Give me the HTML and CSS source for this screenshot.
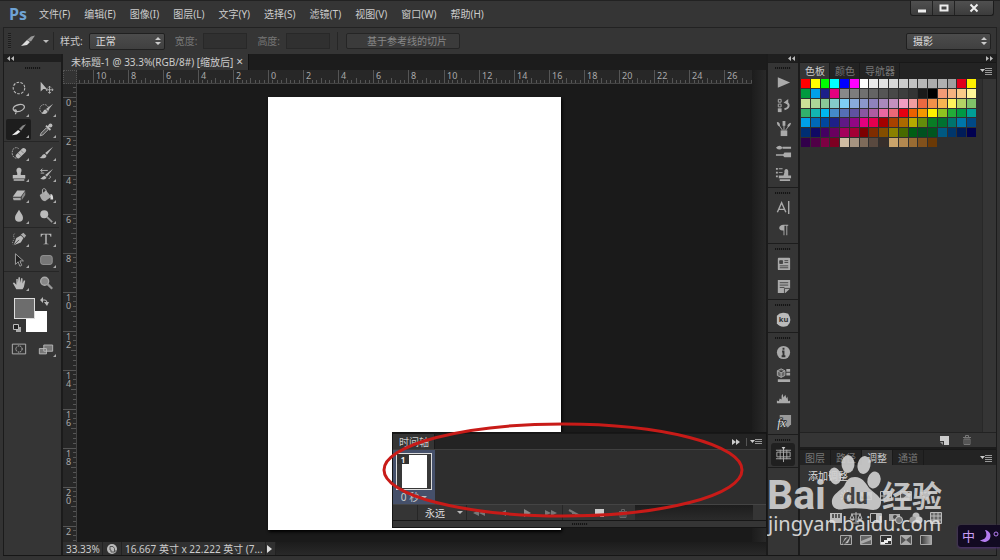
FILE: index.html
```html
<!DOCTYPE html>
<html lang="zh-CN">
<head>
<meta charset="utf-8">
<title>未标题-1</title>
<link rel="stylesheet" href="styles.css">
</head>
<body>
<div class="app">
  <header class="menubar">
    <span class="logo">Ps</span>
    <nav class="menus">
      <button>文件(F)</button><button>编辑(E)</button><button>图像(I)</button><button>图层(L)</button><button>文字(Y)</button><button>选择(S)</button><button>滤镜(T)</button><button>视图(V)</button><button>窗口(W)</button><button>帮助(H)</button>
    </nav>
    <div class="window-controls">
      <button aria-label="最小化"><svg width="10" height="10"><path d="M1 8h8" stroke="#eee" stroke-width="3"/></svg></button>
      <button aria-label="最大化"><svg width="10" height="10"><path d="M1.5 2.5h7v5h-7z" fill="none" stroke="#eee" stroke-width="2"/></svg></button>
      <button class="close" aria-label="关闭"><svg width="10" height="10"><path d="M1.5 1.5l7 7M8.500 1.500l-7 7" stroke="#eee" stroke-width="2"/></svg></button>
    </div>
  </header>

  <div class="options">
    <span class="vgrip"></span>
    <button class="tool-preset" aria-label="切片工具"><svg width="16" height="12"><path d="M1 11L7 5l3 2-3 3z" fill="#ddd"/><path d="M7 5l4-3.500 4-1-4 6z" fill="#999"/></svg><i class="caret"></i></button>
    <span class="vsep"></span>
    <label class="opt-label" for="style">样式:</label>
    <span class="select-wrap style-select"><select id="style"><option>正常</option></select><svg width="6" height="8"><path d="M3 0l3 3H0zM3 8l3-3H0z" fill="#ccc"/></svg></span>
    <label class="opt-label dim" for="w">宽度:</label><input id="w" disabled>
    <label class="opt-label dim" for="h">高度:</label><input id="h" disabled>
    <span class="vsep near"></span>
    <button class="guides" disabled>基于参考线的切片</button>
    <span class="select-wrap workspace"><select aria-label="工作区"><option>摄影</option></select><svg width="6" height="8"><path d="M3 0l3 3H0zM3 8l3-3H0z" fill="#ccc"/></svg></span>
  </div>

  <main class="body">
    <aside class="toolbox">
      <div class="collapse left"><svg width="7" height="5"><path d="M3 0v5L0 2.500zM7 0v5L4 2.500z" fill="#bbb"/></svg></div>
      <span class="grip"></span>
      <div class="tools">
        <button aria-label="椭圆选框" class="more"><svg viewBox="0 0 18 18"><circle cx="9" cy="9" r="6.500" fill="none" stroke="#bbb" stroke-width="1.200" stroke-dasharray="3 1.500"/></svg></button>
        <button aria-label="移动"><svg viewBox="0 0 18 18"><path d="M3 2v11l3-3h4z" fill="#bbb"/><path d="M13 7v8M9 11h8M11.500 8.500L13 7l1.500 1.500M11.500 13.500L13 15l1.500-1.500M10.500 9.500L9 11l1.500 1.500M15.500 9.500L17 11l-1.500 1.500" fill="none" stroke="#bbb"/></svg></button>
        <button aria-label="套索" class="more"><svg viewBox="0 0 18 18"><path d="M5 12C0 9 3 5 9 4s8 3 4 6-8 2-9 1 2-2 2 0-1 3-1 4" fill="none" stroke="#bbb" stroke-width="1.300"/></svg></button>
        <button aria-label="快速选择" class="more"><svg viewBox="0 0 18 18"><circle cx="7" cy="9" r="5" fill="none" stroke="#aaa" stroke-dasharray="2 1"/><path d="M17 3L9 9l2 2zM8.500 9.500c-3 0-2 4-5 4 3 2 7 1 7-2z" fill="#bbb"/></svg></button>
        <button aria-label="切片" class="more active"><svg viewBox="0 0 18 18"><path d="M1 15L8 9l2.500 2-4 3z" fill="#eee"/><path d="M9 8l4-4 4-1.500-5.500 7z" fill="#888"/></svg></button>
        <button aria-label="吸管" class="more"><svg viewBox="0 0 18 18"><path d="M2.500 15.500l1-3 6-6 2 2-6 6z" fill="#555" stroke="#bbb"/><path d="M9 4l5 5M11 6l3-3" stroke="#bbb" stroke-width="2"/><circle cx="14" cy="4" r="2.200" fill="#bbb"/></svg></button>
      </div>
      <div class="tools">
        <button aria-label="修复画笔" class="more"><svg viewBox="0 0 18 18"><path d="M6 15C1 14 0 8 3 4c3-2 5-1 6 1" fill="none" stroke="#aaa" stroke-dasharray="2 1"/><rect x="4" y="6.500" width="14" height="5.500" rx="2.700" transform="rotate(-45 11 9)" fill="#bbb"/><path d="M8 9l3 3M11 6l3 3" stroke="#777"/></svg></button>
        <button aria-label="画笔" class="more"><svg viewBox="0 0 18 18"><path d="M17 2L8 9l2 2zM7.500 10c-3 0-3 4-6 4 3 2 8 1 8-2z" fill="#bbb"/></svg></button>
        <button aria-label="图章" class="more"><svg viewBox="0 0 18 18"><path d="M7 8C5 4 7 2 9 2s4 2 2 6v2h5v4H2v-4h5zM3 15h12v1.500H3z" fill="#bbb"/></svg></button>
        <button aria-label="历史画笔" class="more"><svg viewBox="0 0 18 18"><path d="M17 3L8 10l2 2zM7.500 11c-2 0-3 3-5 3 3 2 7 1 7-1z" fill="#bbb"/><path d="M3 5h8M5 3L3 5l2 2M3 8h4M13 11c2 1 1 3-1 3" fill="none" stroke="#bbb"/></svg></button>
        <button aria-label="橡皮擦" class="more"><svg viewBox="0 0 18 18"><path d="M7 4h9l-5 7H2z" fill="#bbb"/><path d="M2 12h9v3H3z" fill="#aaa"/><path d="M12 11l4-6v4l-4 6z" fill="#888"/></svg></button>
        <button aria-label="油漆桶" class="more"><svg viewBox="0 0 18 18"><path d="M2 9l7-5 6 7-7 5c-3 0-5-3-6-7z" fill="#aaa"/><path d="M5 7V3c1-2 4-1 4 1v5" fill="none" stroke="#bbb"/><path d="M14 8c3 0 3 4 3 6h-3z" fill="#ddd"/></svg></button>
        <button aria-label="模糊" class="more"><svg viewBox="0 0 18 18"><path d="M9 2c2 4 4.500 6 4.500 9a4.500 4.500 0 0 1-9 0C4.500 8 7 6 9 2z" fill="#bbb"/></svg></button>
        <button aria-label="减淡" class="more"><svg viewBox="0 0 18 18"><circle cx="7" cy="7" r="4.500" fill="#bbb"/><path d="M10 10l6 6" stroke="#999" stroke-width="2"/></svg></button>
      </div>
      <div class="tools">
        <button aria-label="钢笔" class="more"><svg viewBox="0 0 18 18"><path d="M3 16l3-8 5-3 3 3-3 5z" fill="#bbb"/><path d="M11 4l4 4 2-3-3-3z" fill="#aaa"/><path d="M3.500 15.500L9 10" stroke="#444"/><path d="M4 3c-3 3 1 4-1 7s-1 3-1 5" fill="none" stroke="#999" stroke-dasharray="1.500 1"/></svg></button>
        <button aria-label="文字" class="more"><svg viewBox="0 0 18 18"><path d="M3 3h12v3.500h-1c0-1.500-1-2.500-2.500-2.500H9.800v10l2.200.5v.5H6v-.500l2.200-.5V4H6.500C5 4 4 5 4 6.500H3z" fill="#bbb"/></svg></button>
        <button aria-label="路径选择" class="more"><svg viewBox="0 0 18 18"><path d="M5 2v12l3-3 2 5 2-1-2-5h4z" fill="#222" stroke="#aaa"/></svg></button>
        <button aria-label="圆角矩形" class="more"><svg viewBox="0 0 18 18"><rect x="3" y="4" width="13" height="10" rx="2.500" fill="#777" stroke="#999"/></svg></button>
      </div>
      <div class="tools">
        <button aria-label="抓手" class="more"><svg viewBox="0 0 18 18"><path d="M6 16L2 9l1.500-.5L6 11V4.500h1.600V9L8.500 2.500h1.600V9L11.500 3.500 13 4v5.500L14.500 6l1.500.5-1.500 7-1.500 2.500z" fill="#bbb"/></svg></button>
        <button aria-label="缩放"><svg viewBox="0 0 18 18"><circle cx="7.500" cy="7" r="4.500" fill="#888" stroke="#aaa" stroke-width="1.500"/><path d="M10.500 10l5.500 5.500" stroke="#999" stroke-width="2.500"/></svg></button>
      </div>
      <div class="colors">
        <span class="bg-color"></span><span class="fg-color"></span>
        <svg class="swap" width="9" height="9"><path d="M2 3h3q2 0 2 3" fill="none" stroke="#bbb"/><path d="M3 0v6L0 3zM4 5h5L7 9z" fill="#bbb"/></svg>
        <svg class="reset" width="9" height="9"><path d="M3 3h5v5H3z" fill="#aaa"/><path d="M.5.500h5v5h-5z" fill="#222" stroke="#bbb"/></svg>
      </div>
      <div class="tools modes">
        <button aria-label="快速蒙版"><svg viewBox="0 0 18 18"><path d="M1.500 3.500h15v11h-15z" fill="#333" stroke="#bbb"/><circle cx="9" cy="9" r="3.500" fill="none" stroke="#ddd" stroke-dasharray="1.500 1"/></svg></button>
        <button aria-label="屏幕模式" class="more"><svg viewBox="0 0 18 18"><path d="M6.500 4.500h10v7h-10zM1.500 8.500h8v6h-8z" fill="#777" stroke="#bbb"/></svg></button>
      </div>
    </aside>

    <section class="document">
      <div class="doc-tabs"><div class="doc-tab"><span>未标题-1 @ 33.3%(RGB/8#) [缩放后]</span><button aria-label="关闭文档">×</button></div></div>
      <div class="workspace-grid">
        <div class="ruler-corner"></div>
        <svg class="ruler-h" id="ruler-h"></svg>
        <div class="vscroll"></div>
        <svg class="ruler-v" id="ruler-v"></svg>
        <div class="canvas"><div class="page"></div></div>
        <div class="vscroll"></div>
      </div>
      <footer class="status">
        <span class="zoom">33.33%</span>
        <span class="proof"><svg width="10" height="10"><circle cx="5" cy="5" r="5" fill="#bbb"/><path d="M3 2.500h3l1.500 2V8H4V6H3zM7 7h3" fill="none" stroke="#555"/></svg></span>
        <span class="doc-size">16.667 英寸 x 22.222 英寸 (7...</span>
        <button aria-label="状态栏选项"><svg width="6" height="8"><path d="M0 0v8l5-4z" fill="#ddd"/></svg></button>
      </footer>
    </section>

    <aside class="dock">
      <div class="collapse"><svg width="7" height="5"><path d="M3 0v5L0 2.500zM7 0v5L4 2.500z" fill="#bbb"/></svg></div>
      <div class="dock-group"><span class="grip"></span>
        <button aria-label="动作"><svg viewBox="0 0 18 18"><path d="M3 3.500v11L16 9z" fill="#aaa"/></svg></button>
        <button aria-label="历史记录"><svg viewBox="0 0 18 18"><path d="M3.500 2.500h3v3h-3zM3.500 7.500h3v3h-3z" fill="none" stroke="#aaa"/><path d="M3 12h4v4H3z" fill="#aaa"/><path d="M10 13c5-1 6-5 2-7" fill="none" stroke="#aaa" stroke-width="2"/><path d="M9 6l5-4v6z" fill="#aaa"/></svg></button>
        <button aria-label="画笔预设"><svg viewBox="0 0 18 18"><path d="M6 11h7v6H6z" fill="#aaa"/><path d="M8 11L4 5M9.500 11V4M11 11l4-5" stroke="#aaa"/><path d="M2 2q4 0 3 5-3-1-3-5zM8 1h3v5H8zM17 3q-1 5-4 4 0-3 4-4z" fill="#aaa"/></svg></button>
        <button aria-label="画笔"><svg viewBox="0 0 18 18"><path d="M1 5q4-4 7 0-3 4-7 0zM8 4h9v2H8zM1 12h9v1.500H1zM10 10h7v5h-7l-2-2z" fill="#aaa"/></svg></button>
        <button aria-label="仿制源"><svg viewBox="0 0 18 18"><path d="M1 2h2v2H1zM1 6h2v2H1zM1 10h2v2H1zM4 2.500h4v1H4zM4 6.500h4v1H4zM9 10l1-3c-1-5 5-5 4 0v3h3v3H4v-3zM5 14h11v2H5z" fill="#aaa"/></svg></button>
      </div>
      <div class="dock-group"><span class="grip"></span>
        <button aria-label="字符"><svg viewBox="0 0 18 18"><path d="M2.500 14L7 4l4.500 10M4 11h6M14.500 2v14" fill="none" stroke="#aaa" stroke-width="1.500"/></svg></button>
        <button aria-label="段落"><svg viewBox="0 0 18 18"><path d="M9 3h5v1h-1v10h-1V4h-2v10H9V9C3 10 3 3 9 3z" fill="#aaa"/></svg></button>
      </div>
      <div class="dock-group"><span class="grip"></span>
        <button aria-label="图层复合"><svg viewBox="0 0 18 18"><rect x="3" y="3" width="13" height="13" rx="1" fill="#aaa"/><path d="M5 6h3v3H5zM10 6h4M10 8h4M5 11.500h9M5 13.500h9" fill="#444" stroke="#444"/></svg></button>
        <button aria-label="注释"><svg viewBox="0 0 18 18"><path d="M3 2h13v9l-5 5H3z" fill="#aaa"/><path d="M5 5h9M5 7.500h9M5 10h5M10 16v-5h6" stroke="#444" fill="none"/></svg></button>
      </div>
      <div class="dock-group"><span class="grip"></span>
        <button aria-label="Kuler"><svg viewBox="0 0 18 18"><path d="M2 5q4-5 12-2 5 8-1 13-8 2-11-3z" fill="#bbb"/><text x="9" y="12" class="ku">ku</text></svg></button>
      </div>
      <div class="dock-group"><span class="grip"></span>
        <button aria-label="信息"><svg viewBox="0 0 18 18"><circle cx="9" cy="9" r="7" fill="#aaa"/><path d="M9 4v2M7.500 8H9v5M7 13h4" stroke="#333" stroke-width="2" fill="none"/></svg></button>
        <button aria-label="属性"><svg viewBox="0 0 18 18"><path d="M6.500 2l4 2v5l-4 2-4-2V4zM2.500 4l4 2 4-2M6.500 6v5" fill="#666" stroke="#aaa"/><path d="M12 2h4v3h-4zM12 6h4v3h-4zM3 13h13v3H3z" fill="#aaa"/></svg></button>
        <button aria-label="直方图"><svg viewBox="0 0 18 18"><path d="M2 14v-3l2 1 1-3 2 1V6l1-2 1 4 2-3 1 4 1-2 1 5 2-1v3z" fill="#aaa"/></svg></button>
        <button aria-label="样式"><svg viewBox="0 0 18 18"><path d="M5 2h12v10l-3 3H5z" fill="#999"/><text x="7" y="15" class="fx">fx</text></svg></button>
      </div>
      <div class="dock-group last"><span class="grip"></span>
        <button class="active" aria-label="时间轴"><svg viewBox="0 0 18 18"><path d="M1 4.500h16M1 13.500h16M2 6.500h14v5H2zM5.500 4v10M12.500 4v10M9 1v16" fill="none" stroke="#aaa"/><path d="M7 1h4L9 4z" fill="#ccc"/></svg></button>
      </div>
    </aside>

    <aside class="panels">
      <div class="collapse"><svg width="7" height="5"><path d="M0 0v5l3-2.500zM4 0v5l3-2.500z" fill="#bbb"/></svg></div>
      <section class="panel swatch-panel">
        <div class="tabs"><button class="on">色板</button><button>颜色</button><button>导航器</button><svg class="menu-icon" width="12" height="8"><path d="M0 2h5L2.500 5z" fill="#ccc"/><path d="M5 1.500h7M5 3.500h7M5 5.500h7M5 7.500h7" stroke="#999"/></svg></div>
        <div class="swatch-area"><div class="swatches" id="swatches"></div></div>
        <div class="panel-footer"><button aria-label="新建色板"><svg width="10" height="10"><path d="M1 1h9v9H5V6H1z" fill="#ccc"/><path d="M1 7l3 3V7z" fill="#999"/></svg></button><button aria-label="删除色板"><svg width="10" height="10"><path d="M1 2.500h8M3.500 2V.500h3V2M2 4h6v5.500H2zM4 4v5M6 4v5" fill="none" stroke="#777"/></svg></button></div>
      </section>
      <section class="panel adjust-panel">
        <div class="tabs"><button>图层</button><button>路径</button><button class="on">调整</button><button>通道</button><svg class="menu-icon" width="12" height="8"><path d="M0 2h5L2.500 5z" fill="#ccc"/><path d="M5 1.500h7M5 3.500h7M5 5.500h7M5 7.500h7" stroke="#999"/></svg></div>
        <p>添加调整</p>
        <div class="adjust-rows">
          <div class="adjust-row">
            <svg viewBox="0 0 14 12"><circle cx="7" cy="6" r="3" fill="#ddd"/><circle cx="7" cy="6" r="5" fill="none" stroke="#ddd" stroke-width="2" stroke-dasharray="1 2"/></svg>
            <svg viewBox="0 0 14 12"><path d="M1 2h12v8H1z" fill="#bbb"/><path d="M2 9V6l2 1 2-4 2 4 2-2 2 4z" fill="#444"/></svg>
            <svg viewBox="0 0 14 12"><path d="M1.500 1.500h11v9h-11zM1 6h12M5 1v10M9 1v10M2 10q6-1 10-8" fill="none" stroke="#bbb"/></svg>
            <svg viewBox="0 0 14 12"><path d="M1.500 1.500h11v9h-11z" fill="#555" stroke="#bbb"/><path d="M12 1v9H2z" fill="#bbb"/></svg>
            <svg viewBox="0 0 14 12"><path d="M1 2h12L7 11z" fill="#bbb"/></svg>
          </div>
          <div class="adjust-row">
            <svg viewBox="0 0 14 12"><path d="M1 1h12v10H1z" fill="#bbb"/><path d="M3 2h2v4H3zM6 2h2v4H6zM9 2h2v4H9z" fill="#555"/></svg>
            <svg viewBox="0 0 14 12"><path d="M7 0v10M2 2h10M4 11h6M3 2L1 7h4zM11 2L9 7h4z" fill="none" stroke="#bbb"/><path d="M1 7h5l-2 2zM8 7h5l-2 2z" fill="#bbb"/></svg>
            <svg viewBox="0 0 14 12"><path d="M1.500 1.500h11v9h-11z" fill="#333" stroke="#bbb"/><path d="M7 2h5v8H7z" fill="#bbb"/></svg>
            <svg viewBox="0 0 14 12"><path d="M0 2h11v7H0z" fill="#aaa"/><circle cx="6" cy="5" r="2" fill="#444"/><circle cx="10" cy="8" r="3.500" fill="#777" stroke="#ccc"/></svg>
            <svg viewBox="0 0 14 12"><circle cx="7" cy="4" r="3.500" fill="#bbb"/><circle cx="4" cy="8" r="3.500" fill="#999"/><circle cx="10" cy="8" r="3.500" fill="#ccc"/></svg>
            <svg viewBox="0 0 14 12"><path d="M1.500.500h11v11h-11zM1 4h12M1 8h12M5 0v12M9 0v12" fill="#666" stroke="#bbb"/></svg>
          </div>
          <div class="adjust-row">
            <svg viewBox="0 0 14 12"><path d="M1.500 1.500h11v9h-11z" fill="#444" stroke="#aaa"/><path d="M12 2L9 9l-6 1 3-6z" fill="#bbb"/><path d="M4 10L10 3" stroke="#444" stroke-width="2"/></svg>
            <svg viewBox="0 0 14 12"><path d="M1.500 1.500h11v9h-11z" fill="#666" stroke="#aaa"/><path d="M2 7l10-4v3L2 10z" fill="#aaa"/></svg>
            <svg viewBox="0 0 14 12"><path d="M1.500 1.500h11v9h-11z" fill="#333" stroke="#bbb"/><path d="M2 8h3V6h3V4h4v3H9v2H6v1H2z" fill="#eee"/></svg>
            <svg viewBox="0 0 14 12"><path d="M1.500 1.500h11v9h-11z" fill="#555" stroke="#aaa"/><path d="M2 2h10L7 6zM2 10l5-4 5 4z" fill="#aaa"/></svg>
            <svg viewBox="0 0 14 12"><defs><linearGradient id="map"><stop stop-color="#333"/><stop offset="1" stop-color="#aaa"/></linearGradient></defs><path d="M1.500 1.500h11v9h-11z" fill="url(#map)" stroke="#aaa"/></svg>
          </div>
        </div>
      </section>
    </aside>
  </main>

  <section class="timeline">
    <div class="tabs"><button class="on">时间轴</button><svg class="menu-icon" width="30" height="8"><path d="M0 1v6l4-3zM4 1v6l4-3z" fill="#ccc"/><path d="M14.500 0v8" stroke="#555"/><path d="M18 2h5l-2.500 3z" fill="#ccc"/><path d="M23 1.500h7M23 3.500h7M23 5.500h7" stroke="#999"/></svg></div>
    <div class="frames"><div class="frame"><div class="thumb"><b>1</b><i></i></div><button>0 秒<i class="caret"></i></button></div></div>
    <div class="playback">
      <button class="loop">永远<i class="caret"></i></button>
      <button aria-label="第一帧"><svg width="14" height="8"><path d="M7 1v6L1 4zM13 1v6L7 4z" fill="#777"/></svg></button>
      <button aria-label="上一帧"><svg width="14" height="8"><path d="M10 1v6L4 4z" fill="#777"/></svg></button>
      <button aria-label="播放"><svg width="14" height="8"><path d="M4 0v8l7-4z" fill="#888"/></svg></button>
      <button aria-label="下一帧" class="ruled"><svg width="14" height="8"><path d="M1 1v6l6-3zM7 1v6l6-3z" fill="#777"/></svg></button>
      <button aria-label="过渡"><svg width="14" height="8"><path d="M1 1l11 6M4 4h3M7 6h3" stroke="#777" stroke-width="2"/></svg></button>
      <button aria-label="复制帧"><svg width="14" height="10"><path d="M3 1h9v8H8V6H3z" fill="#ccc"/></svg></button>
      <button aria-label="删除帧"><svg width="14" height="10"><path d="M3 3.500h8M5.500 3V1.500h3V3M4 4h6v5.500H4zM6 4v5M8 4v5" fill="none" stroke="#666"/></svg></button>
      <span class="hscroll"></span><span class="scroll-end"></span>
    </div>
    <div class="resize"><span class="grip"></span></div>
  </section>

  <svg class="annotation" viewBox="0 0 364 98"><ellipse cx="182" cy="49" rx="179" ry="46" fill="none" stroke="#c81b18" stroke-width="3"/></svg>

  <svg class="watermark" viewBox="0 0 184 94">
    <g fill="#d2d2d2">
      <text x="0" y="59" class="wm-brand">Bai</text>
      <ellipse cx="81" cy="14" rx="6.500" ry="9"/><ellipse cx="97" cy="15" rx="6.500" ry="9" transform="rotate(12 97 15)"/><ellipse cx="68" cy="26" rx="6" ry="8.500" transform="rotate(-12 68 26)"/><ellipse cx="107" cy="30" rx="6.500" ry="8.500" transform="rotate(15 107 30)"/>
      <path d="M88 27c7 0 10 5 14 11 6 6 13 9 12 15-1 7-6 8-14 6-8-1-16-1-23 0-8 2-13-2-12-9 1-6 8-9 12-14 3-6 5-9 11-9z"/>
      <text x="115" y="57" class="wm-cjk">经验</text>
      <text x="1" y="81" class="wm-url">jingyan.baidu.com</text>
    </g>
    <text x="76" y="54" class="wm-du">du</text>
  </svg>

  <div class="ime"><span>中</span><svg width="20" height="14"><path d="M6 1a6 6 0 1 1-5 10c6 0 8-5 5-10z" fill="#b57df0"/><circle cx="17" cy="5" r="2" fill="none" stroke="#b57df0"/></svg></div>
</div>
<script src="app.js"></script>
</body>
</html>
```
FILE: styles.css
```css
* { box-sizing: border-box; }
body {
  margin: 0;
  background: #333;
  color: #ccc;
  font: 10px/14px "Noto Sans", "Noto Sans CJK SC", sans-serif;
}
button, select, input {
  margin: 0;
  padding: 0;
  border: 0;
  background: none;
  color: inherit;
  font: inherit;
}
svg { display: block; flex: none; }
.app {
  position: relative;
  display: flex;
  flex-direction: column;
  min-height: 100vh;
  overflow: hidden;
  padding-bottom: 4px;
}

/* Menu bar */
.menubar {
  display: flex;
  align-items: center;
  height: 27px;
  padding: 0 6px 0 9px;
  border-top: 1px solid #222;
  background: #353535;
}
.logo { width: 30px; color: #6fa3d4; font: bold 16px/22px "Open Sans", sans-serif; }
.menus { display: flex; gap: 14px; }
.menus button { white-space: nowrap; }
.window-controls {
  display: flex;
  align-self: flex-start;
  margin-left: auto;
  border: 1px solid #1c1c1c;
  border-top: 0;
  border-radius: 0 0 3px 3px;
  background: linear-gradient(#505050, #3c3c3c);
}
.window-controls button {
  display: grid;
  place-items: center;
  width: 22px;
  height: 14px;
  border-right: 1px solid #222;
}
.window-controls .close { width: 38px; border: 0; }

/* Options bar */
.options {
  display: flex;
  align-items: center;
  height: 27px;
  margin: 0 3px;
  padding: 0 5px 0 4px;
  border: 1px solid #222;
  border-bottom: 0;
  background: #353535;
}
.vgrip { width: 3px; height: 16px; background: repeating-linear-gradient(#1d1d1d 0 1px, #3a3a3a 1px 2px); }
.tool-preset { display: flex; align-items: center; gap: 7px; margin-left: 9px; }
.caret { width: 0; border: 3px solid transparent; border-top-color: #bbb; border-bottom: 0; }
.vsep { width: 1px; height: 18px; margin: 0 6px 0 4px; background: #262626; }
.vsep.near { margin: 0 8px 0 7px; }
.opt-label { white-space: nowrap; }
.dim { margin-left: 10px; color: #777; }
.options input {
  width: 44px;
  height: 16px;
  margin-left: 6px;
  border: 1px solid #282828;
  background: #303030;
}
.select-wrap {
  position: relative;
  display: flex;
  align-items: center;
  border: 1px solid #202020;
  border-radius: 2px;
  background: linear-gradient(#4c4c4c, #404040);
}
.select-wrap select { width: 100%; height: 15px; padding-left: 6px; appearance: none; color: #ddd; }
.select-wrap svg { position: absolute; right: 3px; pointer-events: none; }
.style-select { width: 76px; margin-left: 6px; }
.workspace { width: 85px; margin-left: auto; }
.guides {
  width: 114px;
  height: 16px;
  padding-left: 8px;
  border: 1px solid #252525;
  border-radius: 2px;
  background: #3b3b3b;
  color: #888;
}

/* Body columns */
.body {
  flex: 1;
  display: grid;
  grid-template-columns: 57px minmax(0, 1fr) 30px 196px;
  gap: 2px;
  margin: 0 3px;
  padding: 0 1px;
  background: #1b1b1b;
  border-bottom: 1px solid #161616;
}
.collapse {
  display: flex;
  justify-content: flex-end;
  align-items: center;
  height: 8px;
  padding-right: 3px;
  background: #1f1f1f;
}
.collapse.left { justify-content: flex-start; padding: 0 0 0 3px; }
.grip {
  display: block;
  width: 16px;
  height: 2px;
  margin: 0 auto;
  background: repeating-linear-gradient(90deg, #141414 0 1px, #303030 1px 2px);
}

/* Toolbox */
.toolbox { background: #353535; }
.toolbox > .grip { margin: 5px auto 8px; }
.tools {
  display: grid;
  grid-template-columns: 27px 27px;
  margin: 0 2px 0 0;
  padding-bottom: 1px;
}
.tools + .tools { border-top: 1px solid #262626; }
.tools button { position: relative; display: grid; place-items: center; height: 21px; margin-left: 2px; border-radius: 2px; }
.tools button svg { width: 16px; height: 16px; }
.tools .active { background: #1d1d1d; }
.more::after {
  content: "";
  position: absolute;
  right: 2px;
  bottom: 2px;
  border-left: 3px solid transparent;
  border-bottom: 3px solid #aaa;
}
.colors { position: relative; height: 44px; }
.fg-color, .bg-color { position: absolute; width: 21px; height: 21px; }
.fg-color { left: 10px; top: 4px; border: 1px solid #ddd; background: #6d6d6d; }
.bg-color { left: 22px; top: 17px; background: #fff; }
.swap { position: absolute; left: 36px; top: 3px; }
.reset { position: absolute; left: 9px; top: 30px; }

/* Document */
.document { display: flex; flex-direction: column; min-width: 0; }
.doc-tabs { height: 16px; background: #1c1c1c; }
.doc-tab {
  display: flex;
  align-items: center;
  justify-content: space-between;
  width: 186px;
  height: 16px;
  padding: 0 5px 0 8px;
  border-right: 1px solid #111;
  background: #353535;
  white-space: nowrap;
}
.doc-tab button { font-size: 12px; }
.workspace-grid {
  flex: 1;
  display: grid;
  grid-template: 14px minmax(0, 1fr) / 14px minmax(0, 1fr) 14px;
}
.ruler-corner { background: #333; border: 1px dotted #555; }
.ruler-h, .ruler-v { width: 100%; height: 100%; overflow: hidden; background: #272727; fill: #aaa; font-size: 9px; }
.ruler-h { border-bottom: 1px solid #444; }
.ruler-v { border-right: 1px solid #444; }
.canvas { display: grid; place-items: center; background: #1a1a1a; }
.page { width: 293px; height: 433px; background: #fff; box-shadow: 1px 2px 3px #000; }
.vscroll { background: linear-gradient(90deg, #1c1c1c, #292929); }
.status {
  display: flex;
  align-items: center;
  height: 13px;
  background: linear-gradient(#1c1c1c, #292929);
  white-space: nowrap;
}
.status > * { display: grid; align-items: center; height: 13px; background: #303030; border-right: 1px solid #222; }
.zoom { width: 40px; padding-left: 3px; }
.proof { width: 19px; justify-items: center; }
.doc-size { padding: 0 2px 0 3px; }
.status button { width: 10px; justify-items: center; }

/* Icon dock */
.dock { background: #353535; }
.dock-group { padding-bottom: 1px; border-top: 1px solid #1c1c1c; }
.dock-group.last { border-bottom: 1px solid #1c1c1c; }
.dock-group .grip { margin: 4px auto 2px; }
.dock-group button { display: grid; place-items: center; width: 24px; height: 23px; margin: 0 auto; border-radius: 3px; }
.dock-group svg { width: 17px; height: 17px; }
.dock-group .active { background: #202020; }
.ku { fill: #333; font: bold 8px "Noto Sans", sans-serif; text-anchor: middle; }
.fx { fill: #ddd; stroke: #333; stroke-width: 2px; paint-order: stroke; font: italic 13px "Liberation Serif", serif; text-anchor: middle; }

/* Panels */
.panels { display: flex; flex-direction: column; background: #353535; }
.panel { display: flex; flex-direction: column; }
.swatch-panel { flex: 1; border-bottom: 2px solid #1c1c1c; }
.tabs {
  display: flex;
  align-items: center;
  height: 16px;
  border-top: 1px solid #181818;
  background: #232323;
  color: #777;
}
.tabs button { height: 15px; padding: 0 4px 0 5px; border-right: 1px solid #1a1a1a; }
.tabs .on { background: #353535; color: #ccc; }
.menu-icon { margin: 0 4px 0 auto; }
.swatch-panel .tabs { height: 17px; }
.swatch-panel .tabs button { height: 16px; padding: 0 4px 0 5px; }
.swatch-area { flex: 1; margin-right: 13px; border-right: 1px solid #282828; background: #2f2f2f; }
.swatches {
  display: grid;
  grid-template-columns: repeat(18, 1fr);
  grid-template-rows: repeat(7, 1fr);
  gap: 1px;
  width: 176px;
  height: 68px;
  padding-left: 1px;
}
.panel-footer {
  display: flex;
  justify-content: flex-end;
  align-items: center;
  gap: 13px;
  height: 15px;
  padding-right: 24px;
  border-top: 1px solid #222;
}
.adjust-panel { height: 106px; }
.adjust-panel .tabs button { padding: 0 5px; }
.adjust-panel p { margin: 4px 8px 7px; color: #ddd; }
.adjust-rows { display: flex; flex-direction: column; gap: 10px; align-items: center; padding-right: 24px; }
.adjust-row { display: flex; gap: 6px; }
.adjust-row svg { width: 14px; height: 12px; }

/* Timeline, floating over the workspace */
.timeline {
  position: absolute;
  right: 233px;
  bottom: 32px;
  width: 375px;
  border: 1px solid #151515;
  background: #2e2e2e;
}
.timeline .tabs .on { padding: 0 5px 0 6px; }
.frames { height: 55px; border-top: 1px solid #404040; }
.frame { display: flex; flex-direction: column; align-items: center; width: 42px; height: 54px; padding-top: 3px; background: #45506a; }
.thumb { display: flex; width: 36px; height: 37px; border: 1px solid #ddd; background: #383838; }
.thumb b {
  z-index: 1;
  width: 12px;
  height: 10px;
  margin-right: -7px;
  background: #333;
  color: #eee;
  font-size: 8px;
  line-height: 11px;
  text-align: center;
}
.thumb i { width: 25px; margin: 1px 0; background: #fff; }
.frame button, .loop { display: flex; align-items: center; gap: 2px; }
.playback { display: flex; align-items: stretch; height: 16px; border-top: 1px solid #444; background: #353535; }
.playback button { display: grid; place-items: center; width: 24px; }
.playback .loop {
  display: flex;
  justify-content: space-between;
  width: 50px;
  margin-left: 24px;
  padding: 0 3px 0 7px;
  border: 1px solid #262626;
  border-width: 0 1px;
  color: #ddd;
}
.playback .ruled { border-right: 1px solid #262626; }
.hscroll { flex: 1; background: linear-gradient(#1d1d1d, #2b2b2b); }
.scroll-end { width: 13px; background: #353535; }
.resize { padding: 2px 0; border-top: 1px solid #171717; background: #353535; }

/* Free overlays */
.annotation { position: absolute; left: 381px; bottom: 41px; width: 364px; height: 98px; }
.watermark { position: absolute; right: 49px; bottom: 16px; width: 184px; height: 94px; opacity: .9; }
.wm-brand { font: bold 41px Roboto, sans-serif; }
.wm-cjk { font: bold 30px "Noto Sans CJK SC", sans-serif; }
.wm-url { font: 20px "Noto Sans", sans-serif; fill: #e4e4e4; }
.wm-du { fill: #444; font: bold 22px Roboto, sans-serif; }
.ime {
  position: absolute;
  right: 0;
  bottom: 13px;
  display: flex;
  align-items: center;
  gap: 4px;
  width: 42px;
  height: 22px;
  padding-left: 4px;
  border-radius: 3px 0 0 3px;
  background: #120a22;
  box-shadow: 0 1px 3px #53307c;
  color: #c99cf5;
  font-size: 13px;
}
```
FILE: app.js
```js
const swatchRows = [
  'ff0000 ffff00 00ff00 00ffff 0000ff ff00ff ffffff ebebeb e1e1e1 d7d7d7 cccccc c2c2c2 b7b7b7 acacac b0b0b0 a0a0a0 e0001b fff100',
  '009a3e 00a0e9 1d2088 e4007f 898989 7d7d7d 707070 646464 555555 484848 3e3e3e 343434 1a1a1a 000000 f29b76 f6b37f facd89 fff799',
  'cce198 acd598 89c997 84ccc9 7ecef4 88abda 8c97cb 8f82bc aa89bd c490bf f19ec2 f29c9f eb6941 f19149 f8b551 fff45c b3d465 80c269',
  '32b16c 13b5b1 00b7ee 448aca 556fb5 5f52a0 8957a1 ae5da1 ea68a2 eb6877 e60012 eb6100 f39800 fff100 8fc31f 22ac38 009944 009e96',
  '00a0e9 0068b7 00479d 1d2088 601986 920783 e4007f e5004f a40000 a84200 ac6a00 b7aa00 638c0b 097c25 007130 00736d 0075a9 004986',
  '002e73 100964 440062 6a005f a4005b a40035 7d0000 7f2d00 834e00 8a8000 486a00 005e15 005120 00561f 005982 00366c 001c58 000050',
  '31004a 500047 7e0043 7d0022 cfbca3 a59380 7e6b5a 59493f 362e2b caa46b b28850 996c33 81511c 6a3906'
];
const swatches = document.getElementById('swatches');
swatchRows.join(' ').split(' ').forEach(hex => {
  const cell = document.createElement('span');
  cell.style.background = '#' + hex;
  swatches.append(cell);
});

// Draws ticks and numbers outward from the page origin, within the ruler's length.
function drawRuler(svg, vertical, origin, step) {
  const box = svg.getBoundingClientRect();
  const length = vertical ? box.height : box.width;
  const from = Math.floor(-origin / step);
  const to = Math.ceil((length - origin) / step);
  let out = '';
  for (let n = from; n <= to; n++) {
    const at = origin + n * step;
    for (let k = 0; k < 8; k++) {
      const p = Math.round(at + k * step / 8) + 0.5;
      if (p < 0 || p > length) continue;
      const start = k === 0 ? 0 : k === 4 ? 8 : 10;
      out += vertical ? `<path d="M${start} ${p}H14"/>` : `<path d="M${p} ${start}V14"/>`;
    }
    const label = String(Math.abs(n * 2));
    if (vertical) {
      [...label].forEach((c, i) => {
        const y = Math.round(at) + 9 + i * 8;
        if (y > 8 && y < length + 1) out += `<text x="3" y="${y}">${c}</text>`;
      });
    } else if (at >= 0 && at + 12 < length) {
      out += `<text x="${Math.round(at) + 3}" y="9">${label}</text>`;
    }
  }
  svg.innerHTML = out;
  svg.querySelectorAll('path').forEach(p => p.setAttribute('stroke', '#555'));
}
function layout() {
  const page = document.querySelector('.page').getBoundingClientRect();
  const h = document.getElementById('ruler-h');
  const v = document.getElementById('ruler-v');
  drawRuler(h, false, page.left - h.getBoundingClientRect().left, 35.1);
  drawRuler(v, true, page.top - v.getBoundingClientRect().top, 39);
}
layout();
addEventListener('resize', layout);
```
